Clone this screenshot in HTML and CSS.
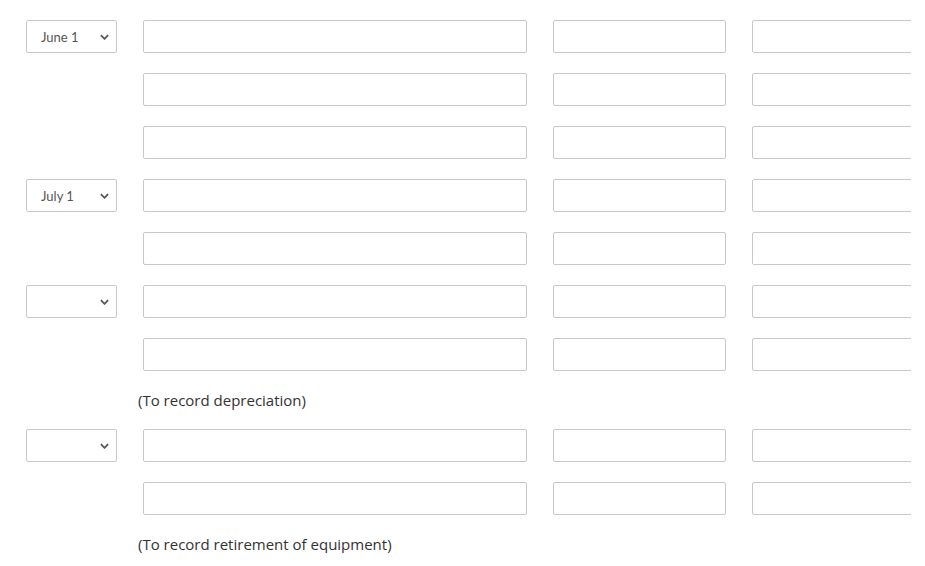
FILE: index.html
```html
<!DOCTYPE html>
<html>
<head>
<meta charset="utf-8">
<link rel="stylesheet" href="styles.css">
</head>
<body>
<div class="sheet">
  <div class="grid">
    <div class="sel"><select><option>June 1</option></select><svg class="chev" viewBox="0 0 10 6"><path d="M1 1l4 4 4-4" fill="none" stroke="#555" stroke-width="2"/></svg></div>
    <input class="acct"><input class="amt"><input class="amt">

    <div></div><input class="acct"><input class="amt"><input class="amt">
    <div></div><input class="acct"><input class="amt"><input class="amt">

    <div class="sel"><select><option>July 1</option></select><svg class="chev" viewBox="0 0 10 6"><path d="M1 1l4 4 4-4" fill="none" stroke="#555" stroke-width="2"/></svg></div>
    <input class="acct"><input class="amt"><input class="amt">
    <div></div><input class="acct"><input class="amt"><input class="amt">

    <div class="sel"><select><option></option></select><svg class="chev" viewBox="0 0 10 6"><path d="M1 1l4 4 4-4" fill="none" stroke="#555" stroke-width="2"/></svg></div>
    <input class="acct"><input class="amt"><input class="amt">
    <div></div><input class="acct"><input class="amt"><input class="amt">
    <div></div><div class="note">(To record depreciation)</div>

    <div class="sel"><select><option></option></select><svg class="chev" viewBox="0 0 10 6"><path d="M1 1l4 4 4-4" fill="none" stroke="#555" stroke-width="2"/></svg></div>
    <input class="acct"><input class="amt"><input class="amt">
    <div></div><input class="acct"><input class="amt"><input class="amt">
    <div></div><div class="note">(To record retirement of equipment)</div>
  </div>
</div>
</body>
</html>
```

FILE: styles.css
```css
html, body {
  margin: 0;
  padding: 0;
  background: #fff;
}
.sheet {
  width: 911px;
  overflow: hidden;
  padding: 20px 0 0 26px;
  box-sizing: border-box;
}
.grid {
  display: grid;
  grid-template-columns: 91px 384px 173px 173px;
  column-gap: 26px;
  row-gap: 20px;
  grid-auto-rows: auto;
}
input {
  height: 33px;
  box-sizing: border-box;
  border: 1px solid #c8c8c8;
  border-radius: 2px;
  margin: 0;
  padding: 0 8px;
  background: #fff;
  font-family: Lato, sans-serif;
  font-size: 13px;
}
.sel {
  position: relative;
  height: 33px;
}
.sel select {
  appearance: none;
  -webkit-appearance: none;
  width: 91px;
  height: 33px;
  box-sizing: border-box;
  border: 1px solid #c8c8c8;
  border-radius: 2px;
  background: #fff;
  margin: 0;
  padding: 0 0 0 14px;
  font-family: Lato, sans-serif;
  font-size: 13px;
  color: #555;
}
.chev {
  position: absolute;
  left: 74px;
  top: 14px;
  width: 9px;
  height: 6px;
  pointer-events: none;
}
.note {
  grid-column: 2 / span 3;
  margin-left: -5px;
  height: 18px;
  line-height: 18px;
  font-family: "Open Sans", sans-serif;
  font-size: 15px;
  color: #333;
}
```
